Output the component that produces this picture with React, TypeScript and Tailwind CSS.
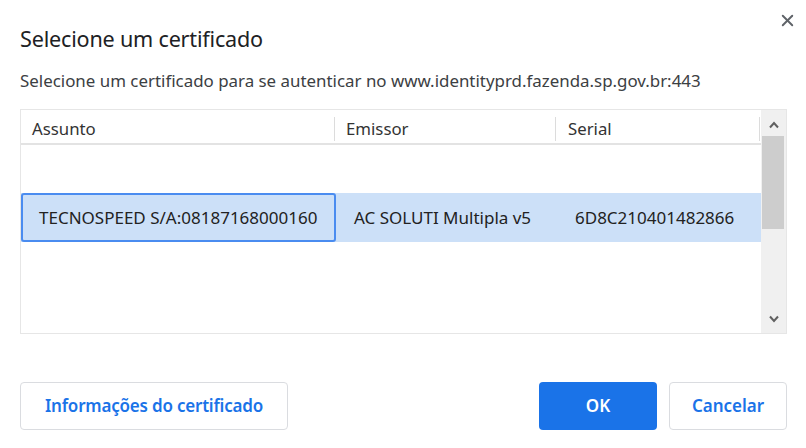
import { X } from "lucide-react";

const font = { fontFamily: '"Noto Sans", "Open Sans", sans-serif' };

export default function App() {
    return (
        <div className="relative w-[806px] h-[448px] bg-white text-[#202124] font-['Noto_Sans',sans-serif]">
            <button className="absolute left-[778px] top-[11px] text-[#5f6368]">
                <X size={19} strokeWidth={2.4} />
            </button>

            <div className="pl-[20px] pr-[19px] pt-[25px]">
                <h1 className="text-[21.6px] leading-[28px] tracking-[-0.2px] text-[#202124]">Selecione um certificado</h1>
                <p className="mt-[17px] text-[16.9px] leading-[22px] text-[#3c4043]">
                    Selecione um certificado para se autenticar no www.identityprd.fazenda.sp.gov.br:443
                </p>

                {/* certificate table */}
                <div className="mt-[17px] h-[225px] border border-[#e6e6e6] flex">
                    <div className="flex-1 flex flex-col">
                        <div className="grid grid-cols-[315px_221px_1fr] h-[35px] pt-[4px] border-b-2 border-[#e3e3e3] text-[16.8px] text-[#333]">
                            <div className="flex items-center justify-between pl-[11px]">
                                <span>Assunto</span>
                                <span className="w-[1px] h-[24px] bg-[#dcdcdc] mr-[1px]" />
                            </div>
                            <div className="flex items-center justify-between pl-[10px]">
                                <span>Emissor</span>
                                <span className="w-[1px] h-[24px] bg-[#dcdcdc] mr-[1px]" />
                            </div>
                            <div className="flex items-center justify-between pl-[11px]">
                                <span>Serial</span>
                                <span className="w-[1px] h-[24px] bg-[#dcdcdc] mr-[1px]" />
                            </div>
                        </div>
                        <div className="mt-[48px] grid grid-cols-[315px_221px_1fr] h-[49px] bg-[#cce0f8] text-[17px] text-[#222]">
                            <div className="flex items-center pl-[16px] border-2 border-[#4a8cf0] rounded-[3px]">
                                TECNOSPEED S/A:08187168000160
                            </div>
                            <div className="flex items-center pl-[18px]">AC SOLUTI Multipla v5</div>
                            <div className="flex items-center pl-[18px]">6D8C210401482866</div>
                        </div>
                    </div>
                    <div className="w-[25px] bg-[#f0f0f0] flex flex-col items-center">
                        <svg width="10" height="8" viewBox="0 0 10 8" className="mt-[11px]">
                            <path d="M1 6.5 L5 2 L9 6.5" fill="none" stroke="#606060" strokeWidth="2" />
                        </svg>
                        <div className="mt-[7px] w-[22px] h-[93px] bg-[#cdcdcd] self-start ml-[1px]" />
                        <svg width="10" height="8" viewBox="0 0 10 8" className="mt-auto mb-[10px]">
                            <path d="M1 1.5 L5 6 L9 1.5" fill="none" stroke="#606060" strokeWidth="2" />
                        </svg>
                    </div>
                </div>

                <div className="mt-[48px] flex items-center">
                    <button style={font} className="h-[48px] w-[268px] rounded-[4px] border border-[#dadce0] text-[#1a73e8] text-[17px] font-semibold tracking-[-0.2px]">
                        Informações do certificado
                    </button>
                    <div className="flex-1" />
                    <button style={font} className="h-[48px] w-[118px] rounded-[4px] bg-[#1a73e8] text-white text-[17px] font-semibold">
                        OK
                    </button>
                    <button style={font} className="ml-[12px] h-[48px] w-[118px] rounded-[4px] border border-[#dadce0] text-[#1a73e8] text-[17px] font-semibold">
                        Cancelar
                    </button>
                </div>
            </div>
        </div>
    );
}
